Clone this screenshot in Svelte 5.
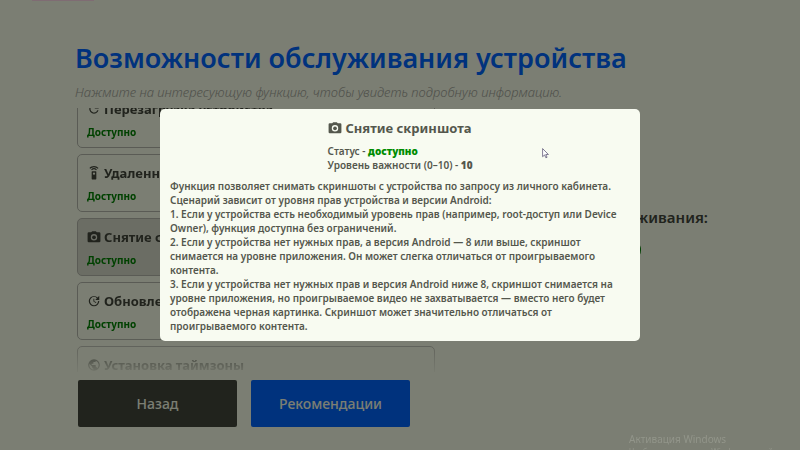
<script lang="ts">
  type Feature = { id: string; icon: string; name: string };

  const features: Feature[] = [
    { id: 'reboot', icon: 'reboot', name: 'Перезагрузка устройства' },
    { id: 'remote', icon: 'remote', name: 'Удаленное управление' },
    { id: 'screenshot', icon: 'camera', name: 'Снятие скриншота' },
    { id: 'update', icon: 'update', name: 'Обновление приложения' },
    { id: 'timezone', icon: 'globe', name: 'Установка таймзоны' },
  ];

  const description = [
    'Функция позволяет снимать скриншоты с устройства по запросу из личного кабинета. Сценарий зависит от уровня прав устройства и версии Android:',
    '1. Если у устройства есть необходимый уровень прав (например, root-доступ или Device Owner), функция доступна без ограничений.',
    '2. Если у устройства нет нужных прав, а версия Android — 8 или выше, скриншот снимается на уровне приложения. Он может слегка отличаться от проигрываемого контента.',
    '3. Если у устройства нет нужных прав и версия Android ниже 8, скриншот снимается на уровне приложения, но проигрываемое видео не захватывается — вместо него будет отображена черная картинка. Скриншот может значительно отличаться от проигрываемого контента.',
  ];

  let selected = $state('screenshot');
</script>

{#snippet icon(name: string)}
  <svg class="icon" viewBox="0 0 24 24" fill="currentColor" aria-hidden="true">
    {#if name === 'camera'}
      <path fill-rule="evenodd" d="M9 2 7.200 4H3a2 2 0 0 0-2 2v13a2 2 0 0 0 2 2h18a2 2 0 0 0 2-2V6a2 2 0 0 0-2-2h-4.200L15 2H9zm3 16a5.500 5.500 0 1 1 0-11 5.500 5.500 0 0 1 0 11z" />
      <circle cx="12" cy="12.500" r="3.200" />
    {:else if name === 'remote'}
      <path d="M15 9H9a1 1 0 0 0-1 1v12a1 1 0 0 0 1 1h6a1 1 0 0 0 1-1V10a1 1 0 0 0-1-1zm-3 6a2 2 0 1 1 0-4 2 2 0 0 1 0 4zM7.050 6.050l1.410 1.410a5 5 0 0 1 7.080 0l1.410-1.410a7 7 0 0 0-9.900 0zM12 0C8.960 0 6.210 1.230 4.220 3.220l1.410 1.410a9 9 0 0 1 12.740 0l1.410-1.410A11 11 0 0 0 12 0z" />
    {:else if name === 'update'}
      <path d="M21 10.120h-6.780l2.740-2.820a7 7 0 0 0-9.800-.1 6.875 6.875 0 0 0 0 9.790 7.020 7.020 0 0 0 9.800 0C18.320 15.650 19 14.080 19 12.100h2c0 1.980-.88 4.550-2.640 6.290a9.050 9.050 0 0 1-12.720 0 8.850 8.850 0 0 1-.02-12.570 8.980 8.980 0 0 1 12.650 0L21 3v7.120zM12.500 8v4.250l3.500 2.080-.72 1.210L11 13V8h1.500z" />
    {:else if name === 'reboot'}
      <path d="M17.650 6.350A8 8 0 1 0 19.730 14h-2.080A6 6 0 1 1 12 6c1.660 0 3.140.69 4.220 1.780L13 11h7V4l-2.350 2.350z" />
    {:else}
      <path d="M12 2a10 10 0 1 0 0 20 10 10 0 0 0 0-20zm-1 17.930A8 8 0 0 1 4.210 10.210L9 15v1a2 2 0 0 0 2 2v1.930zm6.900-2.540A2 2 0 0 0 16 16h-1v-3a1 1 0 0 0-1-1H8v-2h2a1 1 0 0 0 1-1V7h2a2 2 0 0 0 2-2v-.41a8 8 0 0 1 2.900 12.800z" />
    {/if}
  </svg>
{/snippet}

<div class="page">
  <div class="stripe"></div>
  <header>
    <h1>Возможности обслуживания устройства</h1>
    <p class="hint">Нажмите на интересующую функцию, чтобы увидеть подробную информацию.</p>
  </header>

  <main>
    <div class="list">
      {#each features as feature (feature.id)}
        <button
          class="card"
          class:selected={selected === feature.id}
          onclick={() => (selected = feature.id)}
        >
          <span class="card-title">{@render icon(feature.icon)}{feature.name}</span>
          <span class="card-status">Доступно</span>
        </button>
      {/each}
    </div>

    <div class="summary">
      <div class="summary-title">Общий уровень обслуживания:</div>
      <div class="summary-badge">Высокий</div>
    </div>
  </main>

  <footer>
    <button class="btn btn-dark">Назад</button>
    <button class="btn btn-blue">Рекомендации</button>
  </footer>
</div>

<div class="backdrop">
  <div class="modal" role="dialog" aria-modal="true" aria-labelledby="modal-title">
    <h2 id="modal-title">{@render icon('camera')}Снятие скриншота</h2>
    <div class="meta">
      <div>Статус - <b class="ok">доступно</b></div>
      <div>Уровень важности (0–10) - <b>10</b></div>
    </div>
    {#each description as text}
      <p>{text}</p>
    {/each}
  </div>
</div>

<div class="watermark">
  <div class="watermark-title">Активация Windows</div>
  <div class="watermark-text">Чтобы активировать Windows, перейдите в раздел "Параметры".</div>
</div>

<svg class="cursor" viewBox="0 0 12 19" aria-hidden="true">
  <path d="M1 1v14l3.500-3 2.200 5 2-1-2.200-4.800H11z" fill="#fff" stroke="#4b4468" stroke-width="1.200" />
</svg>

<style>
  :global(body) {
    overflow: hidden;
    background: #f6fce6;
  }

  .page,
  .backdrop,
  .watermark {
    font-family: 'Noto Sans', 'Open Sans', sans-serif;
  }

  .page {
    display: flex;
    flex-direction: column;
    box-sizing: border-box;
    min-height: 100vh;
    padding: 0 75px 23px;
    color: #42463a;
  }

  .stripe {
    width: 62px;
    height: 1px;
    margin-left: -43px;
    flex-shrink: 0;
    background: #ffd8e6;
  }

  h1 {
    margin: 38px 0 0;
    font-size: 27px;
    line-height: 38px;
    font-weight: 600;
    color: #0064fa;
    white-space: nowrap;
  }

  .hint {
    margin: 6px 0 0;
    font-size: 13px;
    line-height: 18px;
    font-style: italic;
    font-weight: 300;
    color: #a0a296;
  }

  main {
    display: grid;
    grid-template-columns: 36fr 29fr;
    height: 264px;
    margin-top: 7px;
    overflow: hidden;
  }

  .list {
    display: flex;
    flex-direction: column;
    gap: 6px;
    padding-left: 2px;
    overflow: hidden;
    mask-image: linear-gradient(to bottom, #000 230px, transparent 268px);
  }

  .card:first-child {
    margin-top: -18px;
  }

  .card {
    display: flex;
    flex-direction: column;
    flex-shrink: 0;
    gap: 6px;
    box-sizing: border-box;
    height: 58px;
    padding: 8px 9px;
    border: 1px solid #b4b7aa;
    border-radius: 5px;
    background: transparent;
    font-family: inherit;
    color: #42463a;
    text-align: left;
    cursor: pointer;
  }

  .card.selected {
    background: #d6dac9;
  }

  .card-title,
  h2 {
    display: flex;
    align-items: center;
    gap: 3px;
    font-size: 13px;
    line-height: 20px;
    font-weight: 700;
  }

  .icon {
    width: 14px;
    height: 14px;
    flex-shrink: 0;
  }

  .card-status {
    font-size: 10px;
    line-height: 14px;
    font-weight: 700;
    color: #008200;
  }

  .summary {
    display: flex;
    flex-direction: column;
    align-items: center;
    padding: 99px 0 0 16px;
    gap: 11px;
  }

  .summary-title {
    font-size: 15px;
    line-height: 20px;
    font-weight: 600;
    white-space: nowrap;
  }

  .summary-badge {
    padding: 2px 25px;
    border: 2px solid #008200;
    border-radius: 12px;
    font-size: 12px;
    line-height: 16px;
    color: #008200;
  }

  footer {
    display: flex;
    gap: 14px;
    margin-top: 8px;
    padding-left: 3px;
  }

  .btn {
    flex: 0 0 159px;
    height: 47px;
    border: none;
    border-radius: 2px;
    font-family: inherit;
    font-size: 14px;
    font-weight: 500;
    color: #f6fce6;
    cursor: pointer;
  }

  .btn-dark {
    background: #42463a;
  }

  .btn-blue {
    background: #0064fa;
  }

  .backdrop {
    position: fixed;
    inset: 0;
    display: grid;
    place-items: center;
    background: rgba(0, 0, 0, 0.5);
  }

  .modal {
    box-sizing: border-box;
    width: 60%;
    padding: 9px 10px 8px;
    border-radius: 5px;
    background: #f8fbf1;
    font-size: 10px;
    line-height: 14px;
    font-weight: 600;
    color: #54574d;
  }

  h2 {
    justify-content: center;
    margin: 0;
  }

  .meta {
    width: fit-content;
    margin: 6px auto 7px;
  }

  .modal p {
    margin: 0;
  }

  .ok {
    color: #008c00;
  }

  .watermark {
    position: fixed;
    left: 629px;
    top: 432px;
    font-size: 10px;
    line-height: 14px;
    white-space: nowrap;
    color: #92958a;
  }

  .watermark-text {
    font-size: 8px;
    line-height: 12px;
  }

  .cursor {
    position: fixed;
    left: 542px;
    top: 148px;
    width: 7px;
    height: 11px;
  }
</style>
